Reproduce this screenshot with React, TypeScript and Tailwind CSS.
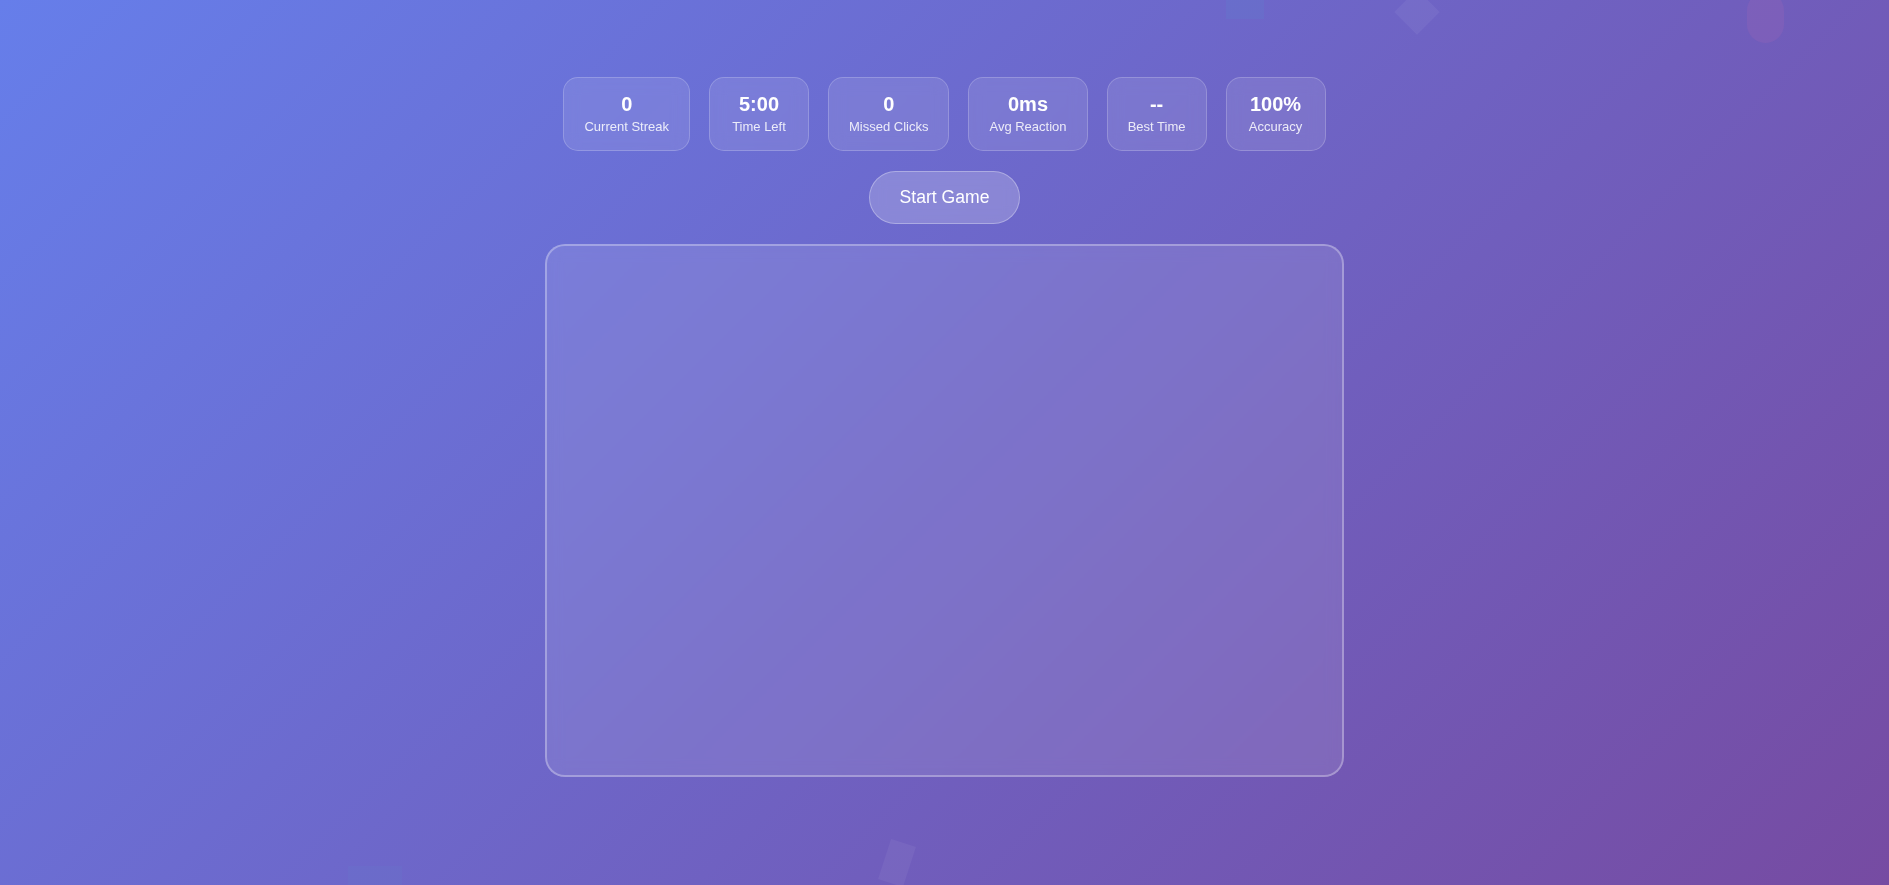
const stats = [
  { value: '0', label: 'Current Streak' },
  { value: '5:00', label: 'Time Left' },
  { value: '0', label: 'Missed Clicks' },
  { value: '0ms', label: 'Avg Reaction' },
  { value: '--', label: 'Best Time' },
  { value: '100%', label: 'Accuracy' },
];

function StatCard({ value, label }: { value: string; label: string }) {
  return (
    <div className="min-w-[100px] px-[20px] py-[15px] rounded-[15px] bg-white/10 border border-white/20 backdrop-blur-sm text-center text-white">
      <div className="text-[20px] font-bold leading-[23px]">{value}</div>
      <div className="mt-[3px] text-[13px] leading-[16px] text-white/85">{label}</div>
    </div>
  );
}

export default function App() {
  return (
    <div
      className="relative h-[885px] overflow-hidden bg-[linear-gradient(135deg,#667eea_0%,#764ba2_100%)]"
      style={{ fontFamily: '"Liberation Sans", Arial, sans-serif' }}
    >
      {/* floating shapes */}
      <div className="absolute left-[1226px] top-[-18px] w-[38px] h-[37px] bg-[#4fa8d8]/10" />
      <div className="absolute left-[1401px] top-[-4px] w-[32px] h-[32px] rotate-45 bg-white/[0.05]" />
      <div className="absolute left-[1747px] top-[-8px] w-[37px] h-[51px] rounded-full bg-[#f07ab0]/10" />
      <div className="absolute left-[884px] top-[842px] w-[26px] h-[42px] rotate-[18deg] bg-white/[0.05]" />
      <div className="absolute left-[348px] top-[866px] w-[54px] h-[50px] bg-[#4fa8d8]/[0.07]" />

      <div className="relative flex flex-col items-center pt-[77px]">
        <div className="flex gap-[19px]">
          {stats.map((s) => (
            <StatCard key={s.label} value={s.value} label={s.label} />
          ))}
        </div>

        <button className="mt-[20px] px-[30px] py-[15px] rounded-full bg-white/20 border border-white/30 text-white text-[17.6px] leading-[21px] backdrop-blur-sm">
          Start Game
        </button>

        <div className="mt-[20px] w-[799px] h-[533px] rounded-[20px] border-2 border-white/30 bg-white/10 backdrop-blur-sm" />
      </div>
    </div>
  );
}
